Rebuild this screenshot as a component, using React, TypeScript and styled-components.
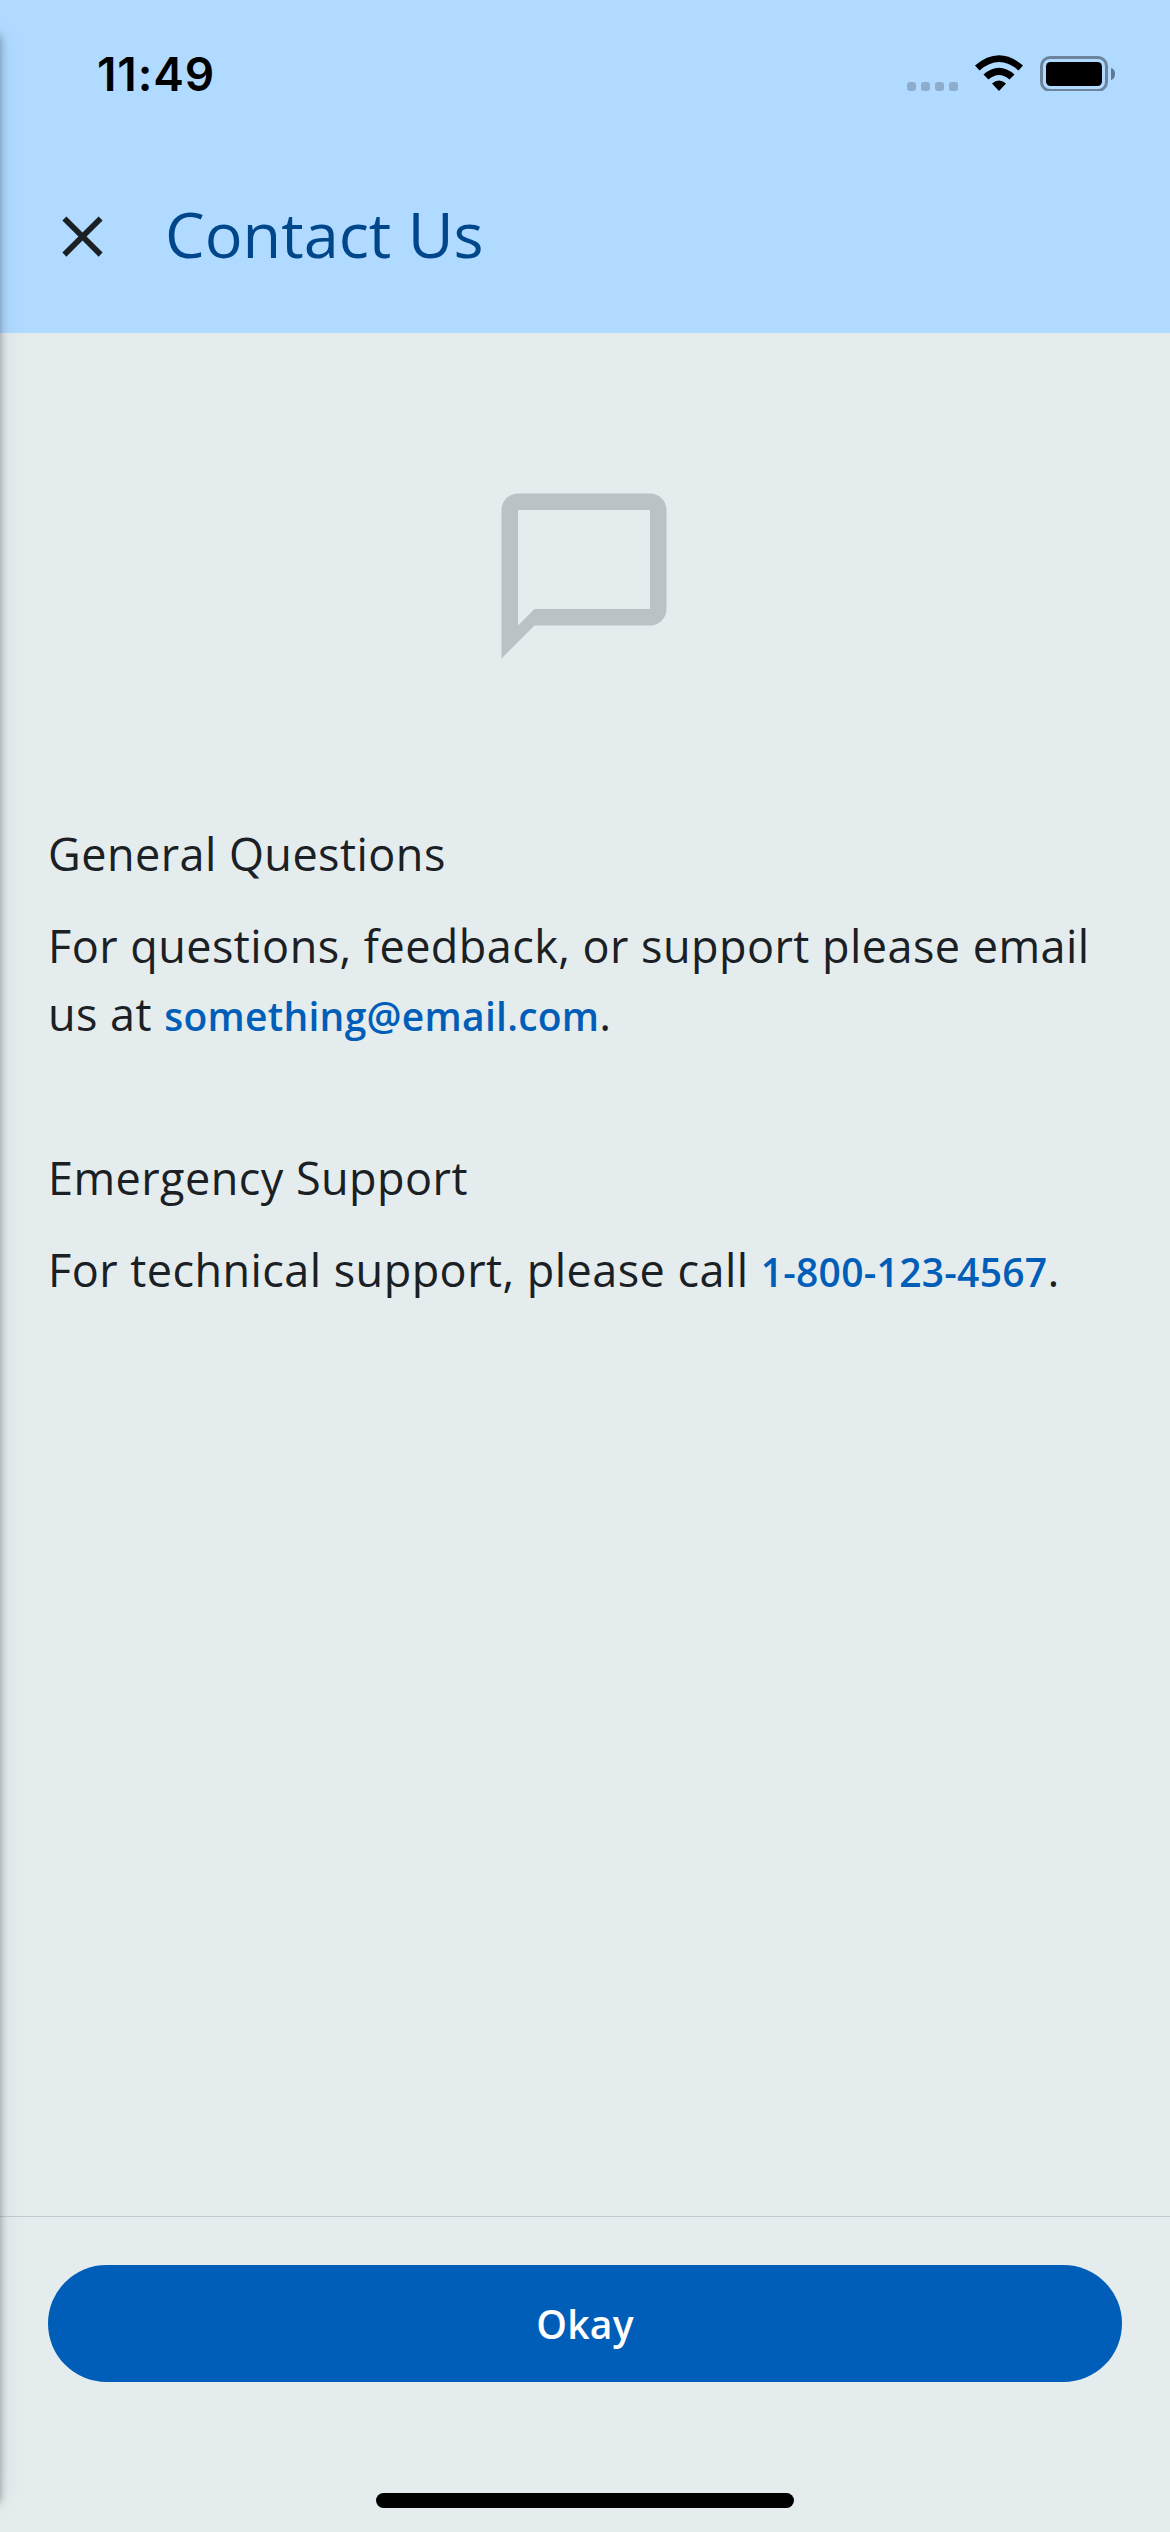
import React from 'react';
import styled, { createGlobalStyle } from 'styled-components';

const GlobalStyle = createGlobalStyle`
  * { box-sizing: border-box; }
  body { margin: 0; background: #e4ecee; }
`;

const Screen = styled.div`
  position: relative;
  display: flex;
  flex-direction: column;
  width: 1170px;
  height: 2532px;
  overflow: hidden;
  background: #e4ecee;
  color: #1a2023;
  font-family: 'Open Sans', 'Noto Sans', sans-serif;
`;

const EdgeShadow = styled.div`
  position: absolute;
  top: 36px;
  bottom: 30px;
  left: -60px;
  width: 60px;
  box-shadow: 0 0 8px rgba(0, 0, 0, 0.36), 0 0 30px rgba(20, 0, 40, 0.08);
`;

const Header = styled.header`
  display: flex;
  flex-direction: column;
  height: 333px;
  background: #b0daff;
`;

const StatusBar = styled.div`
  display: flex;
  justify-content: space-between;
  height: 141px;
  padding: 47px 55px 0 97px;
`;

const Clock = styled.span`
  font: 600 46px/54px Inter, 'Liberation Sans', sans-serif;
  letter-spacing: 0.9px;
  color: #000;
`;

const StatusIcons = styled.svg`
  width: 208px;
  height: 36px;
  margin-top: 8px;
`;

const TitleBar = styled.div`
  display: flex;
  align-items: center;
  height: 191px;
  padding-left: 48px;
  gap: 48px;
`;

const CloseIcon = styled.svg`
  width: 69px;
  height: 69px;
  fill: #1a2023;
`;

const Title = styled.h1`
  margin: 0;
  padding-bottom: 6px;
  font-size: 63px;
  font-weight: 400;
  line-height: 84px;
  color: #00468b;
`;

const Content = styled.main`
  flex: 1;
  padding: 144px 48px 0;
`;

const ChatIcon = styled.svg`
  display: block;
  width: 198px;
  height: 198px;
  margin: 0 auto 145px 437px;
  fill: #bac2c5;
`;

const Section = styled.section`
  display: flex;
  flex-direction: column;
  gap: 24px;
  margin-bottom: 96px;
`;

const Text = styled.p`
  margin: 0;
  font-size: 45px;
  line-height: 68px;
  letter-spacing: 0.45px;
  white-space: nowrap;
`;

const Link = styled.a`
  font-size: 39px;
  font-weight: 600;
  line-height: 1;
  letter-spacing: 0.27px;
  color: #005eb8;
`;

const Footer = styled.footer`
  display: flex;
  flex-direction: column;
  align-items: center;
  height: 316px;
  padding: 48px 48px 0;
  border-top: 1px solid #c5cbce;
`;

const Button = styled.button`
  width: 100%;
  height: 117px;
  border: 0;
  border-radius: 59px;
  background: #005eb8;
  color: #fff;
  font: 600 39px/60px 'Open Sans', 'Noto Sans', sans-serif;
  letter-spacing: 0.27px;
`;

const HomeIndicator = styled.div`
  width: 418px;
  height: 15px;
  margin-top: 111px;
  border-radius: 8px;
  background: #000;
`;

export default function App() {
  return (
    <Screen>
      <GlobalStyle />
      <Header>
        <StatusBar>
          <Clock>11:49</Clock>
          <StatusIcons viewBox="0 0 208 36">
            {[0, 14, 28, 42].map((x) => (
              <rect key={x} x={x} y="27" width="9" height="9" rx="3" fill="#8eaccb" />
            ))}
            <path d="M68 10.5Q92 -10 116 10.5L111.5 15.5Q92 -1.5 72.500 15.500Z" />
            <path d="M76.500 19.500Q92 6 107.500 19.500L102.500 24.500Q92 15.500 81.500 24.500Z" />
            <path d="M85 28.500Q92 22.500 99 28.500L92 36Z" />
            <rect x="134.500" y="2.500" width="65" height="33" rx="8.500" fill="none" stroke="#6c859c" strokeWidth="3" />
            <rect x="139" y="7" width="56" height="24" rx="4.500" />
            <path d="M204 13Q208 14 208 19Q208 24 204 25Z" fill="#5f7990" />
          </StatusIcons>
        </StatusBar>
        <TitleBar>
          <CloseIcon viewBox="0 0 24 24">
            <path d="M19 6.410 17.590 5 12 10.590 6.410 5 5 6.410 10.590 12 5 17.590 6.410 19 12 13.410 17.590 19 19 17.590 13.410 12z" />
          </CloseIcon>
          <Title>Contact Us</Title>
        </TitleBar>
      </Header>
      <Content>
        <ChatIcon viewBox="0 0 24 24">
          <path d="M20 2H4c-1.100 0-2 .9-2 2v18l4-4h14c1.100 0 2-.9 2-2V4c0-1.100-.9-2-2-2zm0 14H6l-2 2V4h16v12z" />
        </ChatIcon>
        <Section>
          <Text>General Questions</Text>
          <Text>
            For questions, feedback, or support please email
            <br />
            us at <Link>something@email.com</Link>.
          </Text>
        </Section>
        <Section>
          <Text>Emergency Support</Text>
          <Text>
            For technical support, please call <Link>1-800-123-4567</Link>.
          </Text>
        </Section>
      </Content>
      <Footer>
        <Button>Okay</Button>
        <HomeIndicator />
      </Footer>
      <EdgeShadow />
    </Screen>
  );
}
